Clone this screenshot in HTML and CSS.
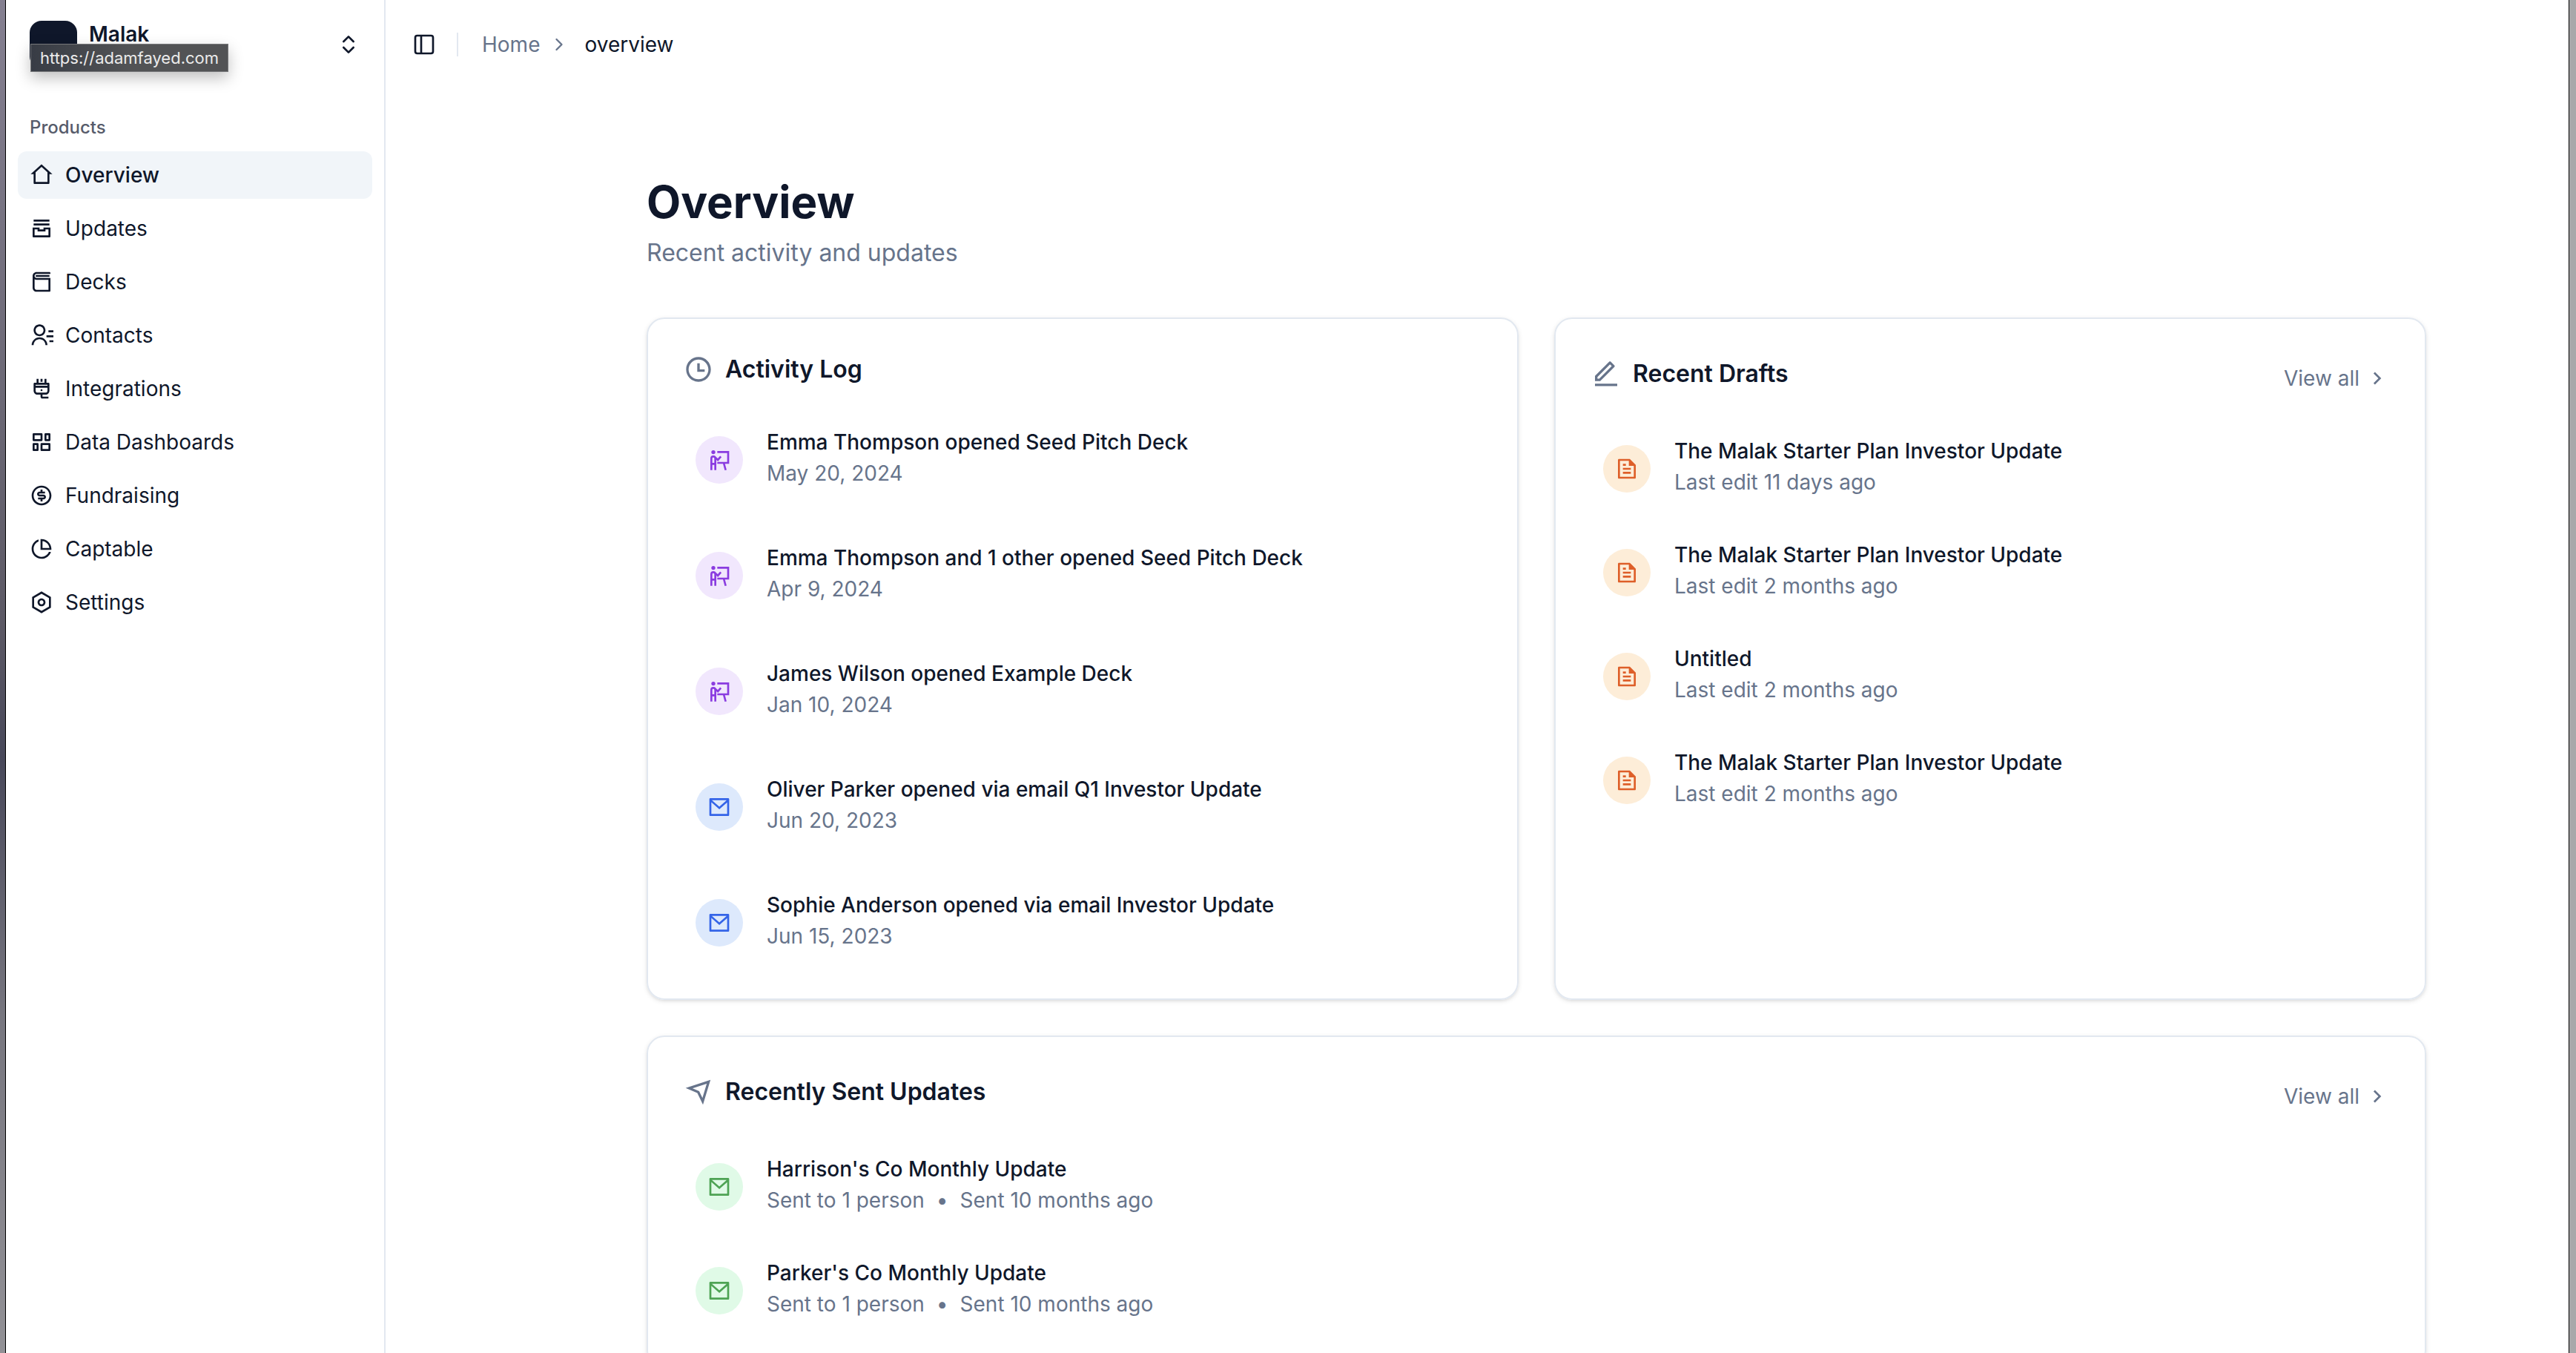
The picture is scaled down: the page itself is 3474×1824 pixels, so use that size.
FILE: index.html
```html
<!DOCTYPE html>
<html lang="en">
<head>
<meta charset="utf-8">
<meta name="viewport" content="width=device-width, initial-scale=1">
<title>Malak – Overview</title>
<link rel="stylesheet" href="styles.css">
</head>
<body>
<svg class="sprite" aria-hidden="true">
  <symbol id="home" viewBox="0 0 24 24"><path d="M19 21H5C4.44772 21 4 20.5523 4 20V11L1 11L11.3273 1.6115C11.7087 1.26475 12.2913 1.26475 12.6727 1.6115L23 11L20 11V20C20 20.5523 19.5523 21 19 21ZM6 19H18V9.15745L12 3.7029L6 9.15745V19Z"/></symbol>
  <symbol id="archive" viewBox="0 0 24 24"><path d="M4 5H20V3H4V5ZM20 9H4V7H20V9ZM3 11H10V13H14V11H21V20C21 20.5523 20.5523 21 20 21H4C3.44772 21 3 20.5523 3 20V11ZM16 13V15H8V13H5V19H19V13H16Z"/></symbol>
  <symbol id="book" viewBox="0 0 24 24"><path d="M21 4H7C5.89543 4 5 4.89543 5 6C5 7.10457 5.89543 8 7 8H21V21C21 21.5523 20.5523 22 20 22H7C4.79086 22 3 20.2091 3 18V6C3 3.79086 4.79086 2 7 2H20C20.5523 2 21 2.44772 21 3V4ZM5 18C5 19.1046 5.89543 20 7 20H19V10H7C6.27143 10 5.58835 9.80521 5 9.46487V18ZM20 7H7C6.44772 7 6 6.55228 6 6C6 5.44772 6.44772 5 7 5H20V7Z"/></symbol>
  <symbol id="contacts" viewBox="0 0 24 24"><path d="M19 7H24V9H19V7ZM17 12H24V14H17V12ZM20 17H24V19H20V17ZM2 22C2 17.5817 5.58172 14 10 14C14.4183 14 18 17.5817 18 22H16C16 18.6863 13.3137 16 10 16C6.68629 16 4 18.6863 4 22H2ZM10 13C6.685 13 4 10.315 4 7C4 3.685 6.685 1 10 1C13.315 1 16 3.685 16 7C16 10.315 13.315 13 10 13ZM10 11C12.21 11 14 9.21 14 7C14 4.79 12.21 3 10 3C7.79 3 6 4.79 6 7C6 9.21 7.79 11 10 11Z"/></symbol>
  <symbol id="plug" viewBox="0 0 24 24"><path d="M13 18V20H19V22H13C11.8954 22 11 21.1046 11 20V18H8C5.79086 18 4 16.2091 4 14V7C4 6.44772 4.44772 6 5 6H7V2H9V6H15V2H17V6H19C19.5523 6 20 6.44772 20 7V14C20 16.2091 18.2091 18 16 18H13ZM8 16H16C17.1046 16 18 15.1046 18 14V11H6V14C6 15.1046 6.89543 16 8 16ZM18 8H6V9H18V8ZM12 14.5C11.4477 14.5 11 14.0523 11 13.5C11 12.9477 11.4477 12.5 12 12.5C12.5523 12.5 13 12.9477 13 13.5C13 14.0523 12.5523 14.5 12 14.5ZM11 2H13V5H11V2Z"/></symbol>
  <symbol id="dashboard" viewBox="0 0 24 24"><path fill="none" stroke="currentColor" stroke-width="2" stroke-linejoin="round" d="M4 4H12V10H4ZM16 4H20V10H16ZM4 14H8V20H4ZM12 14H20V20H12Z"/></symbol>
  <symbol id="dollar" viewBox="0 0 24 24"><path d="M12.0049 22.0027C6.48204 22.0027 2.00488 17.5256 2.00488 12.0027C2.00488 6.4799 6.48204 2.00275 12.0049 2.00275C17.5277 2.00275 22.0049 6.4799 22.0049 12.0027C22.0049 17.5256 17.5277 22.0027 12.0049 22.0027ZM12.0049 20.0027C16.4232 20.0027 20.0049 16.421 20.0049 12.0027C20.0049 7.58447 16.4232 4.00275 12.0049 4.00275C7.5866 4.00275 4.00488 7.58447 4.00488 12.0027C4.00488 16.421 7.5866 20.0027 12.0049 20.0027ZM8.50488 14.0027H14.0049C14.281 14.0027 14.5049 13.7789 14.5049 13.5027C14.5049 13.2266 14.281 13.0027 14.0049 13.0027H10.0049C8.62417 13.0027 7.50488 11.8835 7.50488 10.5027C7.50488 9.12203 8.62417 8.00275 10.0049 8.00275H11.0049V6.00275H13.0049V8.00275H15.5049V10.0027H10.0049C9.72874 10.0027 9.50488 10.2266 9.50488 10.5027C9.50488 10.7789 9.72874 11.0027 10.0049 11.0027H14.0049C15.3856 11.0027 16.5049 12.122 16.5049 13.5027C16.5049 14.8835 15.3856 16.0027 14.0049 16.0027H13.0049V18.0027H11.0049V16.0027H8.50488V14.0027Z"/></symbol>
  <symbol id="pie" viewBox="0 0 24 24"><path d="M9 2.4578V4.58152C6.06817 5.76829 4 8.64262 4 12C4 16.4183 7.58172 20 12 20C15.3574 20 18.2317 17.9318 19.4185 15H21.5422C20.2679 19.0571 16.4776 22 12 22C6.47715 22 2 17.5228 2 12C2 7.52236 4.94289 3.73207 9 2.4578ZM12 2C17.5228 2 22 6.47715 22 12C22 12.3375 21.9833 12.6711 21.9506 13H11V2.04938C11.3289 2.01672 11.6625 2 12 2ZM13 4.06189V11H19.9381C19.4869 7.38128 16.6187 4.51314 13 4.06189Z"/></symbol>
  <symbol id="settings" viewBox="0 0 24 24"><path d="M12 1L21.5 6.5V17.5L12 23L2.5 17.5V6.5L12 1ZM12 3.311L4.5 7.65311V16.3469L12 20.689L19.5 16.3469V7.65311L12 3.311ZM12 16C9.79086 16 8 14.2091 8 12C8 9.79086 9.79086 8 12 8C14.2091 8 16 9.79086 16 12C16 14.2091 14.2091 16 12 16ZM12 14C13.1046 14 14 13.1046 14 12C14 10.8954 13.1046 10 12 10C10.8954 10 10 10.8954 10 12C10 13.1046 10.8954 14 12 14Z"/></symbol>
  <symbol id="updown" viewBox="0 0 24 24"><path fill="none" stroke="currentColor" stroke-width="2" stroke-linecap="round" stroke-linejoin="round" d="M7 15L12 20L17 15M7 9L12 4L17 9"/></symbol>
  <symbol id="panel" viewBox="0 0 24 24"><g fill="none" stroke="currentColor" stroke-width="2"><rect x="3" y="3" width="18" height="18" rx="2"/><path d="M9 3V21"/></g></symbol>
  <symbol id="crumb" viewBox="0 0 24 24"><path fill="none" stroke="currentColor" stroke-width="2" stroke-linecap="round" stroke-linejoin="round" d="M9 18L15 12L9 6"/></symbol>
  <symbol id="arrow" viewBox="0 0 24 24"><path d="M13.1717 12.0007L8.22192 7.05093L9.63614 5.63672L16.0001 12.0007L9.63614 18.3646L8.22192 16.9504L13.1717 12.0007Z"/></symbol>
  <symbol id="clock" viewBox="0 0 24 24"><path d="M12 22C6.47715 22 2 17.5228 2 12C2 6.47715 6.47715 2 12 2C17.5228 2 22 6.47715 22 12C22 17.5228 17.5228 22 12 22ZM12 20C16.4183 20 20 16.4183 20 12C20 7.58172 16.4183 4 12 4C7.58172 4 4 7.58172 4 12C4 16.4183 7.58172 20 12 20ZM13 12H17V14H11V7H13V12Z"/></symbol>
  <symbol id="edit" viewBox="0 0 24 24"><path d="M6.41421 15.89L16.5563 5.74785L15.1421 4.33363L5 14.4758V15.89H6.41421ZM7.24264 17.89H3V13.6473L14.435 2.21231C14.8256 1.82179 15.4587 1.82179 15.8492 2.21231L18.6777 5.04074C19.0682 5.43126 19.0682 6.06443 18.6777 6.45495L7.24264 17.89ZM3 19.89H21V21.89H3V19.89Z"/></symbol>
  <symbol id="send" viewBox="0 0 24 24"><path fill="none" stroke="currentColor" stroke-width="2" stroke-miterlimit="8" d="M20.2 3.8L15.4 19.6L11.8 12.2L4.4 9Z"/></symbol>
  <symbol id="present" viewBox="0 0 24 24"><path fill="none" stroke="currentColor" stroke-width="2" d="M10 4H21V15H10M16.5 15L18.5 22.3M4 22.3V10.5A2 2 0 0 1 8 10.5V22.3M4 16H8M7.5 9.2L10.6 12L13.6 8.6"/><circle cx="6" cy="4.2" r="2"/></symbol>
  <symbol id="mail" viewBox="0 0 24 24"><path d="M3 3H21C21.5523 3 22 3.44772 22 4V20C22 20.5523 21.5523 21 21 21H3C2.44772 21 2 20.5523 2 20V4C2 3.44772 2.44772 3 3 3ZM20 7.23792L12.0718 14.338L4 7.21594V19H20V7.23792ZM4.51146 5L12.0619 11.662L19.501 5H4.51146Z"/></symbol>
  <symbol id="file" viewBox="0 0 24 24"><path d="M21 8V20.9932C21 21.5501 20.5552 22 20.0066 22H3.9934C3.44495 22 3 21.556 3 21.0082V2.9918C3 2.45531 3.4487 2 4.00221 2H14.9968L21 8ZM19 9H14V4H5V20H19V9ZM8 7H11V9H8V7ZM8 11H16V13H8V11ZM8 15H16V17H8V15Z"/></symbol>
</svg>

<div class="desktop">
  <div class="window">
    <aside class="sidebar">
      <div class="team">
        <button class="team-button" type="button" aria-label="Switch workspace">
          <span class="team-logo"></span>
          <span class="team-name">Malak</span>
          <svg class="icon"><use href="#updown"/></svg>
        </button>
        <div class="tooltip" role="tooltip">https://adamfayed.com</div>
      </div>
      <nav class="nav" aria-labelledby="nav-label">
        <h2 class="nav-label" id="nav-label">Products</h2>
        <ul class="nav-list">
          <li><a class="nav-item active" href="#" aria-current="page"><svg class="icon"><use href="#home"/></svg>Overview</a></li>
          <li><a class="nav-item" href="#"><svg class="icon"><use href="#archive"/></svg>Updates</a></li>
          <li><a class="nav-item" href="#"><svg class="icon"><use href="#book"/></svg>Decks</a></li>
          <li><a class="nav-item" href="#"><svg class="icon"><use href="#contacts"/></svg>Contacts</a></li>
          <li><a class="nav-item" href="#"><svg class="icon"><use href="#plug"/></svg>Integrations</a></li>
          <li><a class="nav-item" href="#"><svg class="icon"><use href="#dashboard"/></svg>Data Dashboards</a></li>
          <li><a class="nav-item" href="#"><svg class="icon"><use href="#dollar"/></svg>Fundraising</a></li>
          <li><a class="nav-item" href="#"><svg class="icon"><use href="#pie"/></svg>Captable</a></li>
          <li><a class="nav-item" href="#"><svg class="icon"><use href="#settings"/></svg>Settings</a></li>
        </ul>
      </nav>
    </aside>

    <main class="main">
      <header class="topbar">
        <button class="toggle" type="button" aria-label="Toggle sidebar"><svg class="icon"><use href="#panel"/></svg></button>
        <span class="separator"></span>
        <nav class="crumbs" aria-label="Breadcrumb">
          <a class="crumb-link" href="#">Home</a>
          <svg class="icon-crumb"><use href="#crumb"/></svg>
          <span class="crumb-page">overview</span>
        </nav>
      </header>

      <div class="page">
        <div class="content">
          <div class="intro">
            <h1 class="title">Overview</h1>
            <p class="subtitle">Recent activity and updates</p>
          </div>

          <div class="cards">
            <section class="card">
              <h2 class="card-title"><svg class="icon-title"><use href="#clock"/></svg>Activity Log</h2>
              <ul class="rows rows-loose">
                <li class="row"><span class="badge purple"><svg class="icon"><use href="#present"/></svg></span><div class="text"><p class="row-title">Emma Thompson opened Seed Pitch Deck</p><p class="row-meta">May 20, 2024</p></div></li>
                <li class="row"><span class="badge purple"><svg class="icon"><use href="#present"/></svg></span><div class="text"><p class="row-title">Emma Thompson and 1 other opened Seed Pitch Deck</p><p class="row-meta">Apr 9, 2024</p></div></li>
                <li class="row"><span class="badge purple"><svg class="icon"><use href="#present"/></svg></span><div class="text"><p class="row-title">James Wilson opened Example Deck</p><p class="row-meta">Jan 10, 2024</p></div></li>
                <li class="row"><span class="badge blue"><svg class="icon"><use href="#mail"/></svg></span><div class="text"><p class="row-title">Oliver Parker opened via email Q1 Investor Update</p><p class="row-meta">Jun 20, 2023</p></div></li>
                <li class="row"><span class="badge blue"><svg class="icon"><use href="#mail"/></svg></span><div class="text"><p class="row-title">Sophie Anderson opened via email Investor Update</p><p class="row-meta">Jun 15, 2023</p></div></li>
              </ul>
            </section>

            <section class="card">
              <header class="card-head">
                <h2 class="card-title"><svg class="icon-title"><use href="#edit"/></svg>Recent Drafts</h2>
                <a class="view-all" href="#">View all<svg class="icon"><use href="#arrow"/></svg></a>
              </header>
              <ul class="rows">
                <li class="row"><span class="badge orange"><svg class="icon"><use href="#file"/></svg></span><div class="text"><p class="row-title">The Malak Starter Plan Investor Update</p><p class="row-meta">Last edit 11 days ago</p></div></li>
                <li class="row"><span class="badge orange"><svg class="icon"><use href="#file"/></svg></span><div class="text"><p class="row-title">The Malak Starter Plan Investor Update</p><p class="row-meta">Last edit 2 months ago</p></div></li>
                <li class="row"><span class="badge orange"><svg class="icon"><use href="#file"/></svg></span><div class="text"><p class="row-title">Untitled</p><p class="row-meta">Last edit 2 months ago</p></div></li>
                <li class="row"><span class="badge orange"><svg class="icon"><use href="#file"/></svg></span><div class="text"><p class="row-title">The Malak Starter Plan Investor Update</p><p class="row-meta">Last edit 2 months ago</p></div></li>
              </ul>
            </section>

            <section class="card card-wide">
              <header class="card-head">
                <h2 class="card-title"><svg class="icon-title"><use href="#send"/></svg>Recently Sent Updates</h2>
                <a class="view-all" href="#">View all<svg class="icon"><use href="#arrow"/></svg></a>
              </header>
              <ul class="rows">
                <li class="row"><span class="badge green"><svg class="icon"><use href="#mail"/></svg></span><div class="text"><p class="row-title">Harrison's Co Monthly Update</p><p class="row-meta"><span>Sent to 1 person</span><span>•</span><span>Sent 10 months ago</span></p></div></li>
                <li class="row"><span class="badge green"><svg class="icon"><use href="#mail"/></svg></span><div class="text"><p class="row-title">Parker's Co Monthly Update</p><p class="row-meta"><span>Sent to 1 person</span><span>•</span><span>Sent 10 months ago</span></p></div></li>
              </ul>
            </section>
          </div>
        </div>
      </div>
    </main>
  </div>
</div>
</body>
</html>
```
FILE: styles.css
```css
:root {
  --ink: #0f172a;
  --muted: #67748b;
  --line: #e2e8f0;
}

* { box-sizing: border-box; }

body {
  margin: 0;
  color: var(--ink);
  font-family: Inter, "Liberation Sans", sans-serif;
  font-size: 28px;
  line-height: 40px;
  -webkit-font-smoothing: antialiased;
}

h1, h2, p, ul { margin: 0; padding: 0; font: inherit; }
ul { list-style: none; }
a { color: inherit; text-decoration: none; }
button { margin: 0; border: 0; background: none; color: inherit; font: inherit; text-align: left; }

.sprite { position: absolute; width: 0; height: 0; }
.icon, .icon-title, .icon-crumb { flex: none; display: block; width: 32px; height: 32px; fill: currentColor; }
.icon-title { width: 40px; height: 40px; color: var(--muted); }
.icon-crumb { width: 28px; height: 28px; margin-right: 8px; }

/* strips of the desktop show on both sides of the browser window */
.desktop {
  height: 100vh;
  padding: 0 9px 0 7px;
  background:
    linear-gradient(#858091, #6b6875 30%, #5c5965 46%, #48485a 56%, #77767f 75%, #929196) left / 50% 100% no-repeat,
    #a8a8aa;
}
.window {
  display: flex;
  height: 100%;
  border: solid #000;
  border-width: 0 1px;
  background: #fff;
}

.sidebar {
  flex: none;
  width: 512px;
  border-right: 2px solid var(--line);
}
.team { position: relative; padding: 12px 16px 16px; }
.team-button {
  display: flex;
  align-items: center;
  gap: 16px;
  width: 100%;
  height: 96px;
  padding: 16px;
}
.team-logo { width: 64px; height: 64px; border-radius: 16px; background: var(--ink); }
.team-name { flex: 1; align-self: flex-start; font-weight: 600; line-height: 36px; }
.tooltip {
  position: absolute;
  top: 59px;
  left: 33px;
  padding: 0 12px;
  border: 1px solid #77787a;
  background: linear-gradient(90deg, #383c45, #525355 50%);
  box-shadow: 0 8px 20px rgb(0 0 0 / .25);
  color: #ebebeb;
  font-size: 22px;
  line-height: 36px;
}
.nav { padding: 16px; }
.nav-label {
  padding: 0 16px;
  color: #575c6b;
  font-size: 24px;
  font-weight: 500;
  line-height: 64px;
}
.nav-list { display: grid; gap: 8px; }
.nav-item {
  display: flex;
  align-items: center;
  gap: 16px;
  padding: 12px 16px;
  border-radius: 12px;
}
.nav-item.active { background: #f1f5f9; font-weight: 500; }

.main { flex: 1; min-width: 0; overflow-y: auto; scrollbar-width: none; }
.topbar { display: flex; align-items: center; height: 120px; padding: 0 36px; gap: 28px; }
.toggle { padding: 0; }
.separator { width: 2px; height: 32px; background: var(--line); }
.crumbs { display: flex; align-items: center; gap: 12px; padding-left: 4px; color: var(--muted); }
.crumb-page { color: var(--ink); }

.page { padding: 116px 0 0 160px; }
.content { max-width: 2400px; margin: 0 auto; }
.intro { display: grid; gap: 8px; margin-bottom: 62px; }
.title { font-size: 60px; font-weight: 700; line-height: 72px; }
.subtitle { color: var(--muted); font-size: 32px; line-height: 50px; }

.cards { display: grid; grid-template-columns: 1fr 1fr; gap: 48px; }
.card {
  padding: 48px;
  border: 2px solid var(--line);
  border-radius: 24px;
  box-shadow: 0 2px 6px rgb(0 0 0 / .1), 0 2px 4px -2px rgb(0 0 0 / .1);
}
.card-wide { grid-column: 1 / -1; }
.card-head { display: flex; align-items: center; justify-content: space-between; height: 52px; }
.card-title { display: flex; align-items: center; gap: 16px; font-size: 32px; font-weight: 600; }
.view-all { display: flex; align-items: center; align-self: flex-end; gap: 8px; color: var(--muted); }

.rows { display: grid; gap: 32px; margin-top: 48px; }
.rows-loose { gap: 48px; }
.row { display: flex; align-items: center; gap: 32px; padding: 16px; }
.badge { flex: none; padding: 16px; border-radius: 50%; }
.purple { background: #f1e7fd; color: #8a3ce0; }
.blue { background: #dde9fc; color: #3464e8; }
.orange { background: #fdedd8; color: #de5f29; }
.green { background: #e0fae7; color: #4ea354; }
.text { display: grid; gap: 8px; }
.row-title { font-weight: 500; line-height: 28px; }
.row-meta { display: flex; gap: 16px; color: var(--muted); }
```
